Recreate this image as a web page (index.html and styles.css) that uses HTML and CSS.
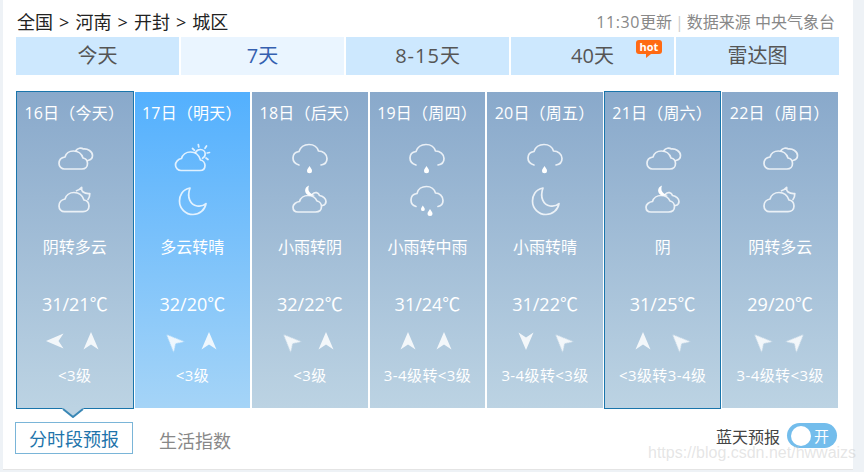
FILE: index.html
```html
<!DOCTYPE html>
<html lang="zh-CN">
<head>
    <meta charset="UTF-8">
    <title>城区天气预报</title>
    <link rel="stylesheet" href="styles.css">
</head>
<body>
    <svg class="defs" width="0" height="0">
        <symbol id="ic-cloudy" viewBox="0 0 40 40">
            <path d="M9.5 31H27C30.5 31 32.5 28.5 32.5 25.5C32.5 22.5 30.5 20.5 28 20C26.5 15.5 22.5 13 18.5 13C14 13 11 15.5 10 19C6.5 19.5 4 22 4 25.5C4 28.5 6.5 31 9.5 31Z"/>
            <path d="M21 12.5C22.5 10 26 9.5 28.5 11C32.5 10.5 37.5 13.5 37.5 17.5C37.5 20 35.5 22 33 22.5"/>
        </symbol>
        <symbol id="ic-sun-cloud" viewBox="0 0 40 40">
            <path d="M9 32.5H28C31 32.5 33 30.5 33 27.5C33 25 31 22.5 28.5 22C27 17 23 14 18.5 14C14 14 10.5 17 9.5 20.5C6 21 3.5 24 3.5 27C3.5 30 6 32.5 9 32.5Z"/>
            <path d="M23.5 14.5C24.5 12.5 26.5 11.5 28.5 11.5C31 11.5 33.2 13.5 33.2 16C33.2 18 32 19.5 30.5 20.3"/>
            <path class="ray" d="M26.3 6.5L26.8 9M34.5 8L33 10.3M37.5 14.5L35.2 15M36 21.5L34 20M20.5 10.5L22.5 12.3"/>
        </symbol>
        <symbol id="ic-rain" viewBox="0 0 40 40">
            <path d="M9 27C5.5 26 3 23.5 3 20C3 16.5 5.5 14 9 13.5C10.5 9 14.5 6.5 19 6.5C24 6.5 27.5 9.5 28.5 13C33 13 37 16 37 20.5C37 24 34.5 26.5 31 27"/>
            <path class="drop" d="M19.5 28C18.5 30 17 31 17 32.7A2.5 2.5 0 0 0 22 32.7C22 31 20.5 30 19.5 28Z"/>
        </symbol>
        <symbol id="ic-rain-big" viewBox="0 0 40 40">
            <path d="M9 25.5C5.5 24.5 4 22 4 19C4 15.5 6.5 13 10 12.5C11 8 15 5.5 19.5 5.5C24 5.5 27.5 8.5 28.5 12C32.5 12 36 15 36 19.5C36 22.5 34 25 31 25.5"/>
            <path class="drop" d="M15.8 24.5C15 26 14 27 14 28.2A1.9 1.9 0 0 0 17.8 28.2C17.8 27 16.6 26 15.8 24.5Z"/>
            <path class="drop" d="M23 28C22 30 20.5 31 20.5 32.6A2.5 2.5 0 0 0 25.5 32.6C25.5 31 24 30 23 28Z"/>
        </symbol>
        <symbol id="ic-moon" viewBox="0 0 40 40">
            <path d="M18 7C10 8.5 7.5 15 7.5 20C7.5 27.5 13.5 33.5 21 33.5C27.5 33.5 33 29 34 22.5C31.5 25 28 25.5 25 25C18.5 24 14.5 16.5 18 7Z"/>
        </symbol>
        <symbol id="ic-moon-cloud" viewBox="0 0 40 40">
            <path d="M9.5 30.7H28C31.5 30.7 34 28.5 34 25C34 22 32 19.5 29 19C27.5 14.5 23.5 11.5 19 11.5C14.5 11.5 11 14.5 10 18C6.5 18.5 4 21.5 4 25C4 28.3 6.5 30.7 9.5 30.7Z"/>
            <path d="M21.5 9.8C23.5 9.3 25.3 7.8 26.7 6.3C25.8 10 28.8 13 34.8 12.5C34.8 15 34.3 17 33 18.5"/>
        </symbol>
        <symbol id="ic-moon-over" viewBox="0 0 40 40">
            <path d="M8 31H25.5C29 31 31.5 29 31.5 25.5C31.5 23 29.5 20.5 27 20C25.5 16.5 22 14.5 18 14.5C14 14.5 10.5 17 9.5 20.5C6 21 3 23.5 3 26C3 29 5 31 8 31Z"/>
            <path d="M22.5 13C25 10.5 28.5 11.5 29.5 14.5C33 15 36 17.5 36 20.5C36 22.5 34.5 24 32.5 24.5"/>
            <path class="drop" d="M19 4.5C15 6 14 10 16.5 13C18.5 15 22 15.5 25 14C21 13.5 19 11 18.5 9C18.2 7.5 18.4 6 19 4.5Z"/>
        </symbol>
        <symbol id="ic-wind" viewBox="0 0 20 20">
            <path class="drop" d="M10 1L17.5 18.5L10 13.5L2.5 18.5Z"/>
        </symbol>
    </svg>

    <div class="page">
        <div class="top-bar">
            <div class="crumbs">全国 &gt; 河南 &gt; 开封 &gt; 城区</div>
            <div class="update"><span class="time">11:30</span>更新<span class="sep">|</span>数据来源 中央气象台</div>
        </div>

        <div class="tabs">
            <div class="tab">今天</div>
            <div class="tab active">7天</div>
            <div class="tab"><span class="num">8-15</span>天</div>
            <div class="tab">40天<span class="hot">hot</span></div>
            <div class="tab">雷达图</div>
        </div>

        <div class="days">
            <div class="day selected">
                <div class="date">16日（今天）</div>
                <svg class="wicon"><use href="#ic-cloudy"/></svg>
                <svg class="wicon"><use href="#ic-moon-cloud"/></svg>
                <div class="desc">阴转多云</div>
                <div class="temp">31/21℃</div>
                <div class="winds">
                    <svg class="wind dir-w"><use href="#ic-wind"/></svg>
                    <svg class="wind dir-n"><use href="#ic-wind"/></svg>
                </div>
                <div class="level">&lt;3级</div>
                <svg class="pointer" width="22" height="10" viewBox="0 0 22 10">
                    <path d="M0 0L11 9L22 0Z" fill="#bcd3e3"/>
                    <path d="M1 1L11 9L21 1" fill="none" stroke="#3a87b5" stroke-width="2"/>
                </svg>
            </div>
            <div class="day today">
                <div class="date">17日（明天）</div>
                <svg class="wicon"><use href="#ic-sun-cloud"/></svg>
                <svg class="wicon"><use href="#ic-moon"/></svg>
                <div class="desc">多云转晴</div>
                <div class="temp">32/20℃</div>
                <div class="winds">
                    <svg class="wind dir-nw"><use href="#ic-wind"/></svg>
                    <svg class="wind dir-n"><use href="#ic-wind"/></svg>
                </div>
                <div class="level">&lt;3级</div>
            </div>
            <div class="day">
                <div class="date">18日（后天）</div>
                <svg class="wicon"><use href="#ic-rain"/></svg>
                <svg class="wicon"><use href="#ic-moon-over"/></svg>
                <div class="desc">小雨转阴</div>
                <div class="temp">32/22℃</div>
                <div class="winds">
                    <svg class="wind dir-nw"><use href="#ic-wind"/></svg>
                    <svg class="wind dir-n"><use href="#ic-wind"/></svg>
                </div>
                <div class="level">&lt;3级</div>
            </div>
            <div class="day">
                <div class="date">19日（周四）</div>
                <svg class="wicon"><use href="#ic-rain"/></svg>
                <svg class="wicon"><use href="#ic-rain-big"/></svg>
                <div class="desc">小雨转中雨</div>
                <div class="temp">31/24℃</div>
                <div class="winds">
                    <svg class="wind dir-n"><use href="#ic-wind"/></svg>
                    <svg class="wind dir-n"><use href="#ic-wind"/></svg>
                </div>
                <div class="level">3-4级转&lt;3级</div>
            </div>
            <div class="day">
                <div class="date">20日（周五）</div>
                <svg class="wicon"><use href="#ic-rain"/></svg>
                <svg class="wicon"><use href="#ic-moon"/></svg>
                <div class="desc">小雨转晴</div>
                <div class="temp">31/22℃</div>
                <div class="winds">
                    <svg class="wind dir-s"><use href="#ic-wind"/></svg>
                    <svg class="wind dir-nw"><use href="#ic-wind"/></svg>
                </div>
                <div class="level">3-4级转&lt;3级</div>
            </div>
            <div class="day selected">
                <div class="date">21日（周六）</div>
                <svg class="wicon"><use href="#ic-cloudy"/></svg>
                <svg class="wicon"><use href="#ic-moon-over"/></svg>
                <div class="desc">阴</div>
                <div class="temp">31/25℃</div>
                <div class="winds">
                    <svg class="wind dir-n"><use href="#ic-wind"/></svg>
                    <svg class="wind dir-nw"><use href="#ic-wind"/></svg>
                </div>
                <div class="level">&lt;3级转3-4级</div>
            </div>
            <div class="day">
                <div class="date">22日（周日）</div>
                <svg class="wicon"><use href="#ic-cloudy"/></svg>
                <svg class="wicon"><use href="#ic-moon-cloud"/></svg>
                <div class="desc">阴转多云</div>
                <div class="temp">29/20℃</div>
                <div class="winds">
                    <svg class="wind dir-nw"><use href="#ic-wind"/></svg>
                    <svg class="wind dir-ne"><use href="#ic-wind"/></svg>
                </div>
                <div class="level">3-4级转&lt;3级</div>
            </div>
        </div>

        <div class="bottom-bar">
            <div class="sub-tab active">分时段预报</div>
            <div class="sub-tab">生活指数</div>
            <div class="blue-sky">
                蓝天预报
                <div class="toggle"><span class="knob"></span>开</div>
            </div>
        </div>
    </div>
    <div class="watermark">https://blog.csdn.net/hwwaizs</div>
</body>
</html>
```

FILE: styles.css
```css
html, body {
    margin: 0;
    padding: 0;
}
body {
    position: relative;
    height: 472px;
    overflow: hidden;
    background-color: #eef2f6;
    font-family: "Open Sans", "Noto Sans CJK SC", sans-serif;
}
.defs {
    display: block;
    height: 0;
}
.page {
    box-sizing: border-box;
    width: 850px;
    height: 470px;
    margin-left: 3px;
    padding-left: 13px;
    background-color: white;
    border-bottom: 1px solid #e4e4e4;
}
.top-bar {
    display: flex;
    justify-content: space-between;
    align-items: center;
    width: 819px;
    height: 37px;
    padding-top: 4px;
    box-sizing: border-box;
}
.crumbs {
    margin-left: 1px;
    font-size: 18px;
    word-spacing: 1.4px;
    color: #222;
}
.update {
    font-size: 16px;
    color: #888;
}
.time {
    letter-spacing: .6px;
}
.sep {
    margin: 0 3px;
    color: #ccc;
}
.tabs {
    display: flex;
    gap: 2px;
    width: 823px;
}
.tab {
    position: relative;
    flex: 1;
    height: 38px;
    line-height: 38px;
    text-align: center;
    font-size: 20px;
    color: #555;
    background-color: #cde8fe;
}
.tab.active {
    color: #3560b0;
    background-color: #eaf5ff;
}
.num {
    letter-spacing: 1px;
}
.hot {
    position: absolute;
    top: 3px;
    left: 125px;
    width: 26px;
    height: 14px;
    line-height: 14px;
    border-radius: 3px;
    font-size: 11px;
    font-weight: bold;
    color: white;
    background-color: #ff6a13;
}
.hot::after {
    content: "";
    position: absolute;
    left: 10px;
    top: 14px;
    border-top: 4px solid #ff6a13;
    border-right: 5px solid transparent;
}
.days {
    display: grid;
    grid-template-columns: repeat(7, 1fr);
    gap: 2px;
    width: 821px;
    margin: 17px 0 0 1px;
}
.day {
    position: relative;
    display: flex;
    flex-direction: column;
    align-items: center;
    height: 316px;
    padding-top: 10px;
    box-sizing: border-box;
    color: white;
    background: linear-gradient(#89a9cb, #bcd3e3);
}
.day.today {
    background: linear-gradient(#53b0fe, #a5d4f7);
}
.day.selected {
    outline: 1px solid #1a75ab;
}
.date {
    height: 22px;
    line-height: 22px;
    font-size: 16px;
    letter-spacing: .2px;
    margin-left: -1px;
    white-space: nowrap;
    margin-bottom: 14px;
}
.wicon {
    width: 40px;
    height: 40px;
    margin-bottom: 3px;
    flex-shrink: 0;
    fill: none;
    stroke: white;
    stroke-opacity: .8;
    stroke-width: 1.7;
    stroke-linecap: round;
    stroke-linejoin: round;
    filter: blur(.3px);
}
.drop {
    fill: white;
    stroke: none;
}
.desc {
    height: 22px;
    line-height: 22px;
    margin-top: 12px;
    font-size: 16px;
}
.temp {
    height: 24px;
    line-height: 24px;
    margin-top: 34px;
    font-size: 18px;
}
.winds {
    display: flex;
    gap: 16px;
    margin-top: 15px;
    margin-left: -3px;
}
.wind {
    display: block;
    width: 20px;
    height: 20px;
    fill: white;
    opacity: .85;
    filter: blur(.4px);
}
.dir-n { transform: rotate(0deg); }
.dir-ne { transform: rotate(45deg); }
.dir-s { transform: rotate(180deg); }
.dir-w { transform: rotate(-90deg); }
.dir-nw { transform: rotate(-45deg); }
.level {
    height: 20px;
    line-height: 20px;
    margin-top: 14px;
    font-size: 15px;
    letter-spacing: .4px;
    white-space: nowrap;
}
.pointer {
    position: absolute;
    left: 45px;
    top: 316px;
}
.bottom-bar {
    display: flex;
    align-items: center;
    width: 822px;
    height: 32px;
    margin-top: 14px;
    margin-left: -1px;
    font-size: 18px;
}
.sub-tab {
    margin-left: 26px;
    margin-top: 3px;
    color: #888;
}
.sub-tab.active {
    box-sizing: border-box;
    width: 118px;
    height: 32px;
    line-height: 32px;
    margin-left: 0;
    margin-top: 0;
    text-align: center;
    color: #1e74ab;
    border: 1px solid #7ab5d8;
}
.blue-sky {
    display: flex;
    align-items: center;
    gap: 7px;
    align-self: flex-start;
    margin-top: 1px;
    margin-left: auto;
    font-size: 16px;
    color: #444;
}
.toggle {
    display: flex;
    align-items: center;
    box-sizing: border-box;
    width: 50px;
    height: 25px;
    padding-left: 4px;
    border-radius: 13px;
    font-size: 15px;
    color: white;
    background-color: #73bdec;
}
.knob {
    width: 20px;
    height: 20px;
    margin-right: 3px;
    border-radius: 50%;
    background-color: white;
}
.watermark {
    position: absolute;
    left: 648px;
    top: 446px;
    font-family: "Liberation Sans", sans-serif;
    font-size: 16px;
    line-height: 14px;
    color: rgba(190, 190, 190, .4);
    white-space: nowrap;
}
```
